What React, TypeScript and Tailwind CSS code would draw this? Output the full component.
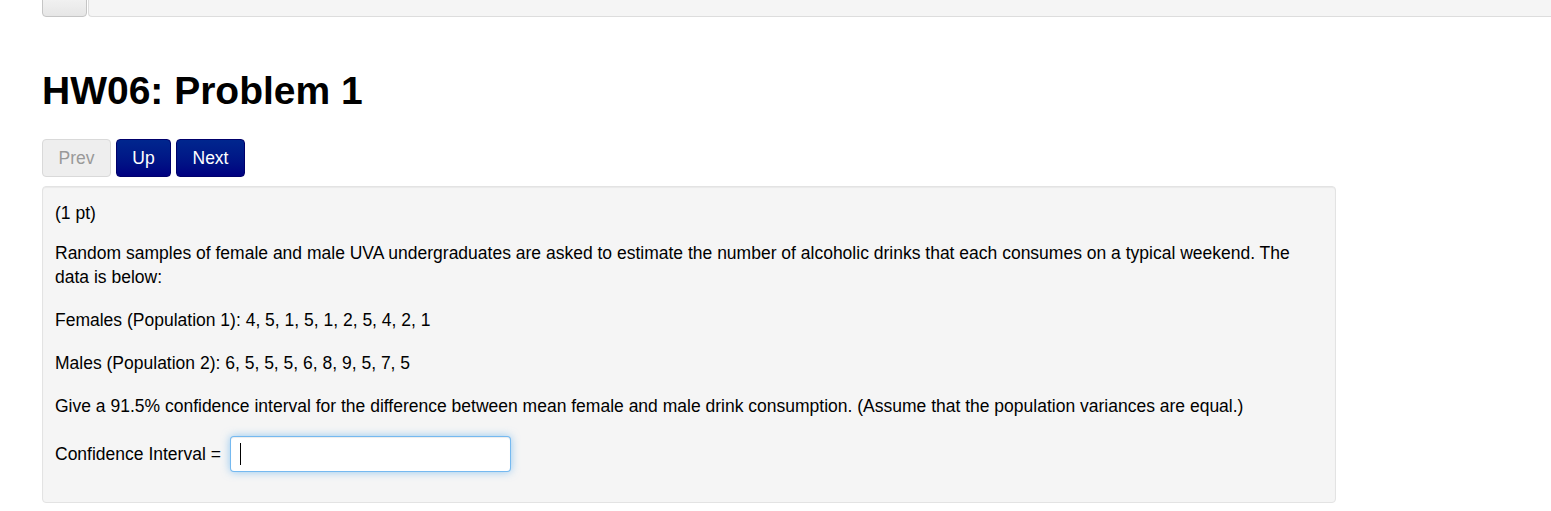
import React from 'react';

const font = { fontFamily: '"Liberation Sans", Arial, sans-serif' };

export default function App() {
  return (
    <div className="min-h-[511px] bg-white text-[17.5px] text-black" style={font}>
      {/* top bar, scrolled mostly out of view */}
      <div className="flex h-[17px] items-end overflow-hidden pl-[42px]">
        <div className="h-[40px] w-[45px] shrink-0 rounded-b-[4px] border border-[#c5c5c5] bg-gradient-to-b from-[#ffffff] to-[#e6e6e6]" />
        <div className="ml-[1px] h-[40px] flex-1 rounded-bl-[4px] border-b border-l border-[#dddddd] bg-[#f5f5f5]" />
      </div>

      <div className="pl-[42px]">
        <h1 className="mt-[52px] text-[39px] font-bold leading-[43px]">HW06: Problem 1</h1>

        <div className="mt-[27px] flex gap-[5px]">
          <button className="h-[38px] w-[69px] rounded-[4px] border border-[#d9d9d9] bg-[#eeeeee] text-[#999999]">
            Prev
          </button>
          <button className="h-[38px] w-[55px] rounded-[4px] border border-[#00006b] bg-gradient-to-b from-[#00268e] to-[#000080] text-white">
            Up
          </button>
          <button className="h-[38px] w-[69px] rounded-[4px] border border-[#00006b] bg-gradient-to-b from-[#00268e] to-[#000080] text-white">
            Next
          </button>
        </div>

        <div className="mt-[9px] w-[1294px] rounded-[4px] border border-[#e3e3e3] bg-[#f5f5f5] px-[12px] pb-[30px] pt-[14px] leading-[24px] shadow-[inset_0_1px_1px_rgba(0,0,0,0.05)]">
          <p>(1 pt)</p>
          <p className="mt-[16px]">
            Random samples of female and male UVA undergraduates are asked to estimate the number of alcoholic drinks that each consumes on a typical weekend. The data is below:
          </p>
          <p className="mt-[19px]">Females (Population 1): 4, 5, 1, 5, 1, 2, 5, 4, 2, 1</p>
          <p className="mt-[19px]">Males (Population 2): 6, 5, 5, 5, 6, 8, 9, 5, 7, 5</p>
          <p className="mt-[19px]">
            Give a 91.5% confidence interval for the difference between mean female and male drink consumption. (Assume that the population variances are equal.)
          </p>
          <div className="mt-[18px] flex items-center gap-[9px]">
            <span>Confidence Interval =</span>
            <div className="flex h-[36px] w-[281px] items-center rounded-[4px] border border-[rgba(82,168,236,0.8)] bg-white px-[9px] shadow-[inset_0_1px_1px_rgba(0,0,0,0.075),0_0_8px_rgba(82,168,236,0.6)]">
              <span className="h-[22px] w-px bg-black" />
            </div>
          </div>
        </div>
      </div>
    </div>
  );
}
